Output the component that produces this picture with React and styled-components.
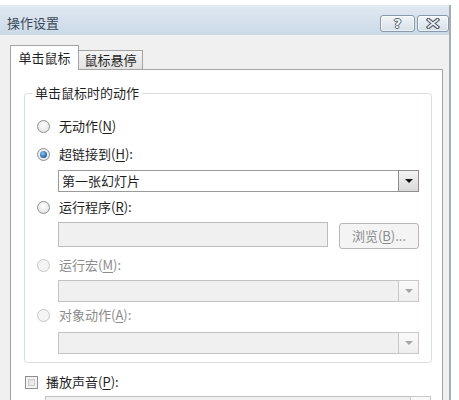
import React from 'react'
import styled, { createGlobalStyle, css } from 'styled-components'

const GlobalStyle = createGlobalStyle`
  html, body {
    margin: 0;
    padding: 0;
    background: #ffffff;
  }
  body {
    font-family: "Noto Sans CJK SC", "Microsoft YaHei", sans-serif;
    font-size: 13px;
    line-height: 16px;
    color: #1f1f1f;
    overflow: hidden;
  }
  * { box-sizing: border-box; }
`

const Window = styled.div`
  margin-top: 5px;
  width: 451px;
  height: 395px;
  border-right: 2px solid #a6adb4;
  background: #f0f0f0;
`

const TitleBar = styled.div`
  height: 30px;
  display: flex;
  align-items: flex-end;
  padding: 0 0 3px 7px;
  background: linear-gradient(#e1e9f2, #cbd9e7);
`

const Title = styled.div`
  flex: 1;
  color: #3a4856;
  font-size: 13px;
  line-height: 17px;
  margin-bottom: 1px;
`

const CaptionButton = styled.div`
  width: ${p => p.$w}px;
  height: 17px;
  margin-left: 2px;
  display: flex;
  align-items: center;
  justify-content: center;
  border: 1px solid #8a9aac;
  border-radius: 3px;
  background: linear-gradient(#f1f5f9, #d6e0ea);
  box-shadow: inset 0 0 0 1px rgba(255, 255, 255, 0.55);
  font-family: "DejaVu Sans", sans-serif;
  font-weight: bold;
  font-size: 13px;
  color: #f3f5f7;
  text-shadow: 1px 0 0 #59636e, -1px 0 0 #59636e, 0 1px 0 #59636e, 0 -1px 0 #59636e;
`

const Body = styled.div`
  padding: 10px 6px 0 10px;
`

const TabStrip = styled.div`
  display: flex;
  align-items: flex-end;
  height: 24px;
  position: relative;
  z-index: 1;
`

const Tab = styled.div`
  display: flex;
  align-items: center;
  justify-content: center;
  border: 1px solid #a3a3a3;
  border-bottom: none;
  ${p => p.$active ? css`
    width: 69px;
    height: 25px;
    margin-bottom: -1px;
    background: #ffffff;
    position: relative;
    z-index: 2;
  ` : css`
    width: 65px;
    height: 19px;
    margin-left: -1px;
    background: linear-gradient(#f4f4f4, #e2e2e2);
  `}
`

const Panel = styled.div`
  border: 1px solid #a3a3a3;
  background: #ffffff;
  padding: 15px 10px 30px 13px;
`

const Group = styled.fieldset`
  margin: 0;
  padding: 15px 12px 8px 12px;
  border: 1px solid #d5dfe5;
  border-radius: 3px;
`

const Legend = styled.legend`
  padding: 0 3px;
  margin-left: -5px;
  line-height: 16px;
`

const OptionRow = styled.div`
  display: flex;
  align-items: center;
  height: 20px;
  margin-top: ${p => p.$top || 0}px;
  padding-left: ${p => p.$indent || 0}px;
  color: ${p => p.$disabled ? '#8c8c8c' : '#1f1f1f'};
`

const Radio = styled.span`
  width: 13px;
  height: 13px;
  margin-right: 9px;
  border-radius: 50%;
  flex-shrink: 0;
  display: flex;
  align-items: center;
  justify-content: center;
  border: 1px solid ${p => p.$disabled ? '#c6c6c6' : '#8e8f8f'};
  background: ${p => p.$disabled
    ? '#f4f4f4'
    : 'radial-gradient(circle at 50% 40%, #ffffff, #dcdcdc)'};
  &::after {
    content: '';
    display: ${p => p.$checked ? 'block' : 'none'};
    width: 7px;
    height: 7px;
    border-radius: 50%;
    background: radial-gradient(circle at 40% 35%, #8fc3ef, #1b5aa0 75%);
  }
`

const CheckBox = styled.span`
  width: 13px;
  height: 13px;
  margin-right: 8px;
  flex-shrink: 0;
  border: 1px solid #8e8f8f;
  background: linear-gradient(135deg, #dcdcdc, #f8f8f8);
  box-shadow: inset 0 0 0 2px #f4f4f4, inset 0 0 0 3px #c9c9c9;
`

const Key = styled.span`
  text-decoration: underline;
  text-underline-offset: 2px;
`

const Combo = styled.div`
  display: flex;
  height: 22px;
  margin-top: ${p => p.$top || 0}px;
  margin-left: ${p => p.$left ?? 21}px;
  margin-right: ${p => p.$right || 0}px;
  border: 1px solid ${p => p.$disabled ? '#c3c3c3' : '#9a9a9a'};
  background: ${p => p.$disabled ? '#f0f0f0' : '#ffffff'};
`

const ComboText = styled.div`
  flex: 1;
  padding-left: 3px;
  line-height: 20px;
`

const DropButton = styled.div`
  width: 21px;
  margin: -1px -1px -1px 0;
  display: flex;
  align-items: center;
  justify-content: center;
  border: 1px solid ${p => p.$disabled ? '#c8c8c8' : '#8e8e8e'};
  background: ${p => p.$disabled
    ? 'linear-gradient(#fafafa, #eeeeee)'
    : 'linear-gradient(#f4f4f4, #d9d9d9)'};
  &::after {
    content: '';
    border-left: 4px solid transparent;
    border-right: 4px solid transparent;
    border-top: 4px solid ${p => p.$disabled ? '#a6a6a6' : '#111111'};
  }
`

const FieldRow = styled.div`
  display: flex;
  align-items: flex-start;
  gap: 11px;
  height: 28px;
  margin-top: ${p => p.$top || 0}px;
  margin-left: 21px;
`

const TextBox = styled.div`
  flex: 1;
  height: 25px;
  border: 1px solid #bcbcbc;
  background: #f0f0f0;
`

const PushButton = styled.div`
  width: 80px;
  height: 26px;
  margin-top: 1px;
  display: flex;
  align-items: center;
  justify-content: center;
  border: 1px solid #b7b7b7;
  border-radius: 3px;
  background: #f4f4f4;
  color: #8c8c8c;
`

function CloseGlyph() {
  return (
    <svg width="14" height="11" viewBox="0 0 14 11">
      <path d="M2.5 1.8 L11.5 9.2 M11.5 1.8 L2.5 9.2" stroke="#56606b" strokeWidth="4" strokeLinecap="square" fill="none" />
      <path d="M2.5 1.8 L11.5 9.2 M11.5 1.8 L2.5 9.2" stroke="#eef2f6" strokeWidth="1.6" strokeLinecap="square" fill="none" />
    </svg>
  )
}

function Option({ label, hotkey, checked, disabled, top }) {
  return (
    <OptionRow $top={top} $disabled={disabled}>
      <Radio $checked={checked} $disabled={disabled} />
      <span>{label}(<Key>{hotkey}</Key>){label === '无动作' ? '' : ':'}</span>
    </OptionRow>
  )
}

export default function App() {
  return (
    <>
      <GlobalStyle />
      <Window>
        <TitleBar>
          <Title>操作设置</Title>
          <CaptionButton $w={35}>?</CaptionButton>
          <CaptionButton $w={32}><CloseGlyph /></CaptionButton>
        </TitleBar>
        <Body>
          <TabStrip>
            <Tab $active>单击鼠标</Tab>
            <Tab>鼠标悬停</Tab>
          </TabStrip>
          <Panel>
            <Group>
              <Legend>单击鼠标时的动作</Legend>
              <Option label="无动作" hotkey="N" />
              <Option label="超链接到" hotkey="H" checked top={8} />
              <Combo $top={6}>
                <ComboText>第一张幻灯片</ComboText>
                <DropButton />
              </Combo>
              <Option label="运行程序" hotkey="R" top={5} />
              <FieldRow $top={5}>
                <TextBox />
                <PushButton>浏览(<Key>B</Key>)...</PushButton>
              </FieldRow>
              <Option label="运行宏" hotkey="M" disabled top={5} />
              <Combo $top={5} $disabled>
                <ComboText />
                <DropButton $disabled />
              </Combo>
              <Option label="对象动作" hotkey="A" disabled top={3} />
              <Combo $top={7} $disabled>
                <ComboText />
                <DropButton $disabled />
              </Combo>
            </Group>
            <OptionRow $top={9} $indent={1}>
              <CheckBox />
              <span>播放声音(<Key>P</Key>):</span>
            </OptionRow>
            <Combo $top={4} $left={21} $right={1} $disabled>
              <ComboText />
              <DropButton $disabled />
            </Combo>
          </Panel>
        </Body>
      </Window>
    </>
  )
}
